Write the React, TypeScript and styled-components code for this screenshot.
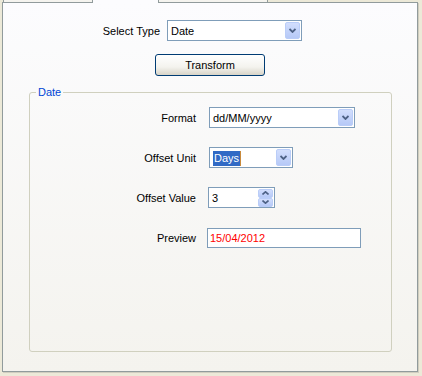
import styled, { createGlobalStyle } from "styled-components";

const GlobalStyle = createGlobalStyle`
  html, body {
    margin: 0;
    padding: 0;
    background: #ece9d8;
  }
  body {
    font-family: "Liberation Sans", Arial, sans-serif;
    font-size: 11px;
    color: #000;
  }
`;

const Window = styled.div`
  width: 422px;
  height: 376px;
  box-sizing: border-box;
  padding: 0 4px 4px 2px;
  display: flex;
  flex-direction: column;
  background: #ece9d8;
`;

const TabStrip = styled.div`
  height: 2px;
  display: flex;
  align-items: flex-end;
  padding-left: 1px;
`;

const Tab = styled.div<{ $w: number; $active?: boolean }>`
  width: ${(p) => p.$w}px;
  box-sizing: border-box;
  height: ${(p) => (p.$active ? 3 : 2)}px;
  margin-bottom: ${(p) => (p.$active ? -1 : 0)}px;
  position: relative;
  z-index: ${(p) => (p.$active ? 1 : 0)};
  background: ${(p) => (p.$active ? "#fcfcfe" : "#f5f4ef")};
  border-left: ${(p) => (p.$active ? "none" : "1px solid #919b9c")};
  border-right: ${(p) => (p.$active ? "none" : "1px solid #919b9c")};
`;

const Panel = styled.div`
  flex: 1;
  display: flex;
  flex-direction: column;
  align-items: flex-start;
  border: 1px solid #919b9c;
  box-shadow: 1px 1px 0 #d0cdbf;
  background: linear-gradient(#fcfcfe, #f4f3ee);
`;

const TopRow = styled.div`
  display: flex;
  align-items: center;
  margin: 17px 0 0 93px;
`;

const FieldLabel = styled.span<{ $w: number }>`
  width: ${(p) => p.$w}px;
  text-align: right;
  white-space: nowrap;
`;

const Combo = styled.div<{ $w: number; $shift?: number }>`
  width: ${(p) => p.$w}px;
  height: 21px;
  box-sizing: border-box;
  margin-left: ${(p) => p.$shift ?? 0}px;
  border: 1px solid #7f9db9;
  background: #fff;
  display: flex;
  align-items: center;
  padding: 1px;
`;

const ComboText = styled.span`
  flex: 1;
  padding-left: 2px;
  white-space: nowrap;
`;

const Selected = styled.span`
  background: #316ac5;
  color: #fff;
  padding: 1px 1px 2px 1px;
  border-right: 1px solid #c88a3c;
`;

const DropButton = styled.div`
  width: 15px;
  height: 17px;
  box-sizing: border-box;
  border: 1px solid #bacdf8;
  border-radius: 2px;
  background: linear-gradient(#d2defd, #b6c9f7);
  display: flex;
  align-items: center;
  justify-content: center;
`;

const SpinButtons = styled.div`
  width: 15px;
  height: 18px;
  display: flex;
  flex-direction: column;
`;

const SpinButton = styled.div`
  flex: 1;
  box-sizing: border-box;
  border: 1px solid #bacdf8;
  border-radius: 2px;
  background: linear-gradient(#d2defd, #b6c9f7);
  display: flex;
  align-items: center;
  justify-content: center;
`;

const PushButton = styled.button`
  align-self: center;
  margin-top: 13px;
  width: 110px;
  height: 22px;
  box-sizing: border-box;
  border: 1px solid #003c74;
  border-radius: 3px;
  background: linear-gradient(#ffffff 0%, #f4f3ee 60%, #d8d4c8 100%);
  font-family: "Liberation Sans", Arial, sans-serif;
  font-size: 11px;
  color: #000;
  padding: 0;
`;

const Group = styled.fieldset`
  flex: 1;
  margin: 10px 0 19px 26px;
  width: 363px;
  box-sizing: border-box;
  min-width: 0;
  border: 1px solid #d0d0bf;
  border-radius: 3px;
  padding: 8px 0 0 0;
`;

const GroupTitle = styled.legend`
  margin-left: 6px;
  padding: 0 2px;
  color: #0046d5;
  font-size: 11px;
  line-height: 13px;
`;

const FormGrid = styled.div`
  display: grid;
  grid-template-columns: 166px auto;
  grid-auto-rows: 21px;
  column-gap: 13px;
  row-gap: 19px;
  align-items: center;
  justify-items: start;
`;

const TextBox = styled.div<{ $w: number; $shift?: number; $color?: string }>`
  width: ${(p) => p.$w}px;
  height: 20px;
  box-sizing: border-box;
  margin-left: ${(p) => p.$shift ?? 0}px;
  border: 1px solid #7f9db9;
  background: #fff;
  color: ${(p) => p.$color ?? "#000"};
  display: flex;
  align-items: center;
  padding: 0 1px 0 2px;
`;

const Chevron = ({ up }: { up?: boolean }) => (
  <svg width="7" height="5" viewBox="0 0 7 5">
    <path
      d={up ? "M0.5 4 L3.5 1 L6.5 4" : "M0.5 1 L3.5 4 L6.5 1"}
      fill="none"
      stroke="#4d6185"
      strokeWidth="1.8"
    />
  </svg>
);

const SmallChevron = ({ up }: { up?: boolean }) => (
  <svg width="7" height="4" viewBox="0 0 7 4">
    <path
      d={up ? "M0.5 3.5 L3.5 0.8 L6.5 3.5" : "M0.5 0.5 L3.5 3.2 L6.5 0.5"}
      fill="none"
      stroke="#4d6185"
      strokeWidth="1.6"
    />
  </svg>
);

export default function App() {
  return (
    <>
      <GlobalStyle />
      <Window>
        <TabStrip>
          <Tab $w={90} />
          <Tab $w={65} $active />
          <Tab $w={110} />
        </TabStrip>
        <Panel>
          <TopRow>
            <FieldLabel $w={64}>Select Type</FieldLabel>
            <Combo $w={135} $shift={7}>
              <ComboText>Date</ComboText>
              <DropButton>
                <Chevron />
              </DropButton>
            </Combo>
          </TopRow>

          <PushButton>Transform</PushButton>

          <Group>
            <GroupTitle>Date</GroupTitle>
            <FormGrid>
              <FieldLabel $w={166}>Format</FieldLabel>
              <Combo $w={146}>
                <ComboText>dd/MM/yyyy</ComboText>
                <DropButton>
                  <Chevron />
                </DropButton>
              </Combo>

              <FieldLabel $w={166}>Offset Unit</FieldLabel>
              <Combo $w={84}>
                <ComboText>
                  <Selected>Days</Selected>
                </ComboText>
                <DropButton>
                  <Chevron />
                </DropButton>
              </Combo>

              <FieldLabel $w={166}>Offset Value</FieldLabel>
              <Combo $w={67} $shift={-1}>
                <ComboText>3</ComboText>
                <SpinButtons>
                  <SpinButton>
                    <SmallChevron up />
                  </SpinButton>
                  <SpinButton>
                    <SmallChevron />
                  </SpinButton>
                </SpinButtons>
              </Combo>

              <FieldLabel $w={166}>Preview</FieldLabel>
              <TextBox $w={154} $shift={-2} $color="#ff0000">
                15/04/2012
              </TextBox>
            </FormGrid>
          </Group>
        </Panel>
      </Window>
    </>
  );
}
